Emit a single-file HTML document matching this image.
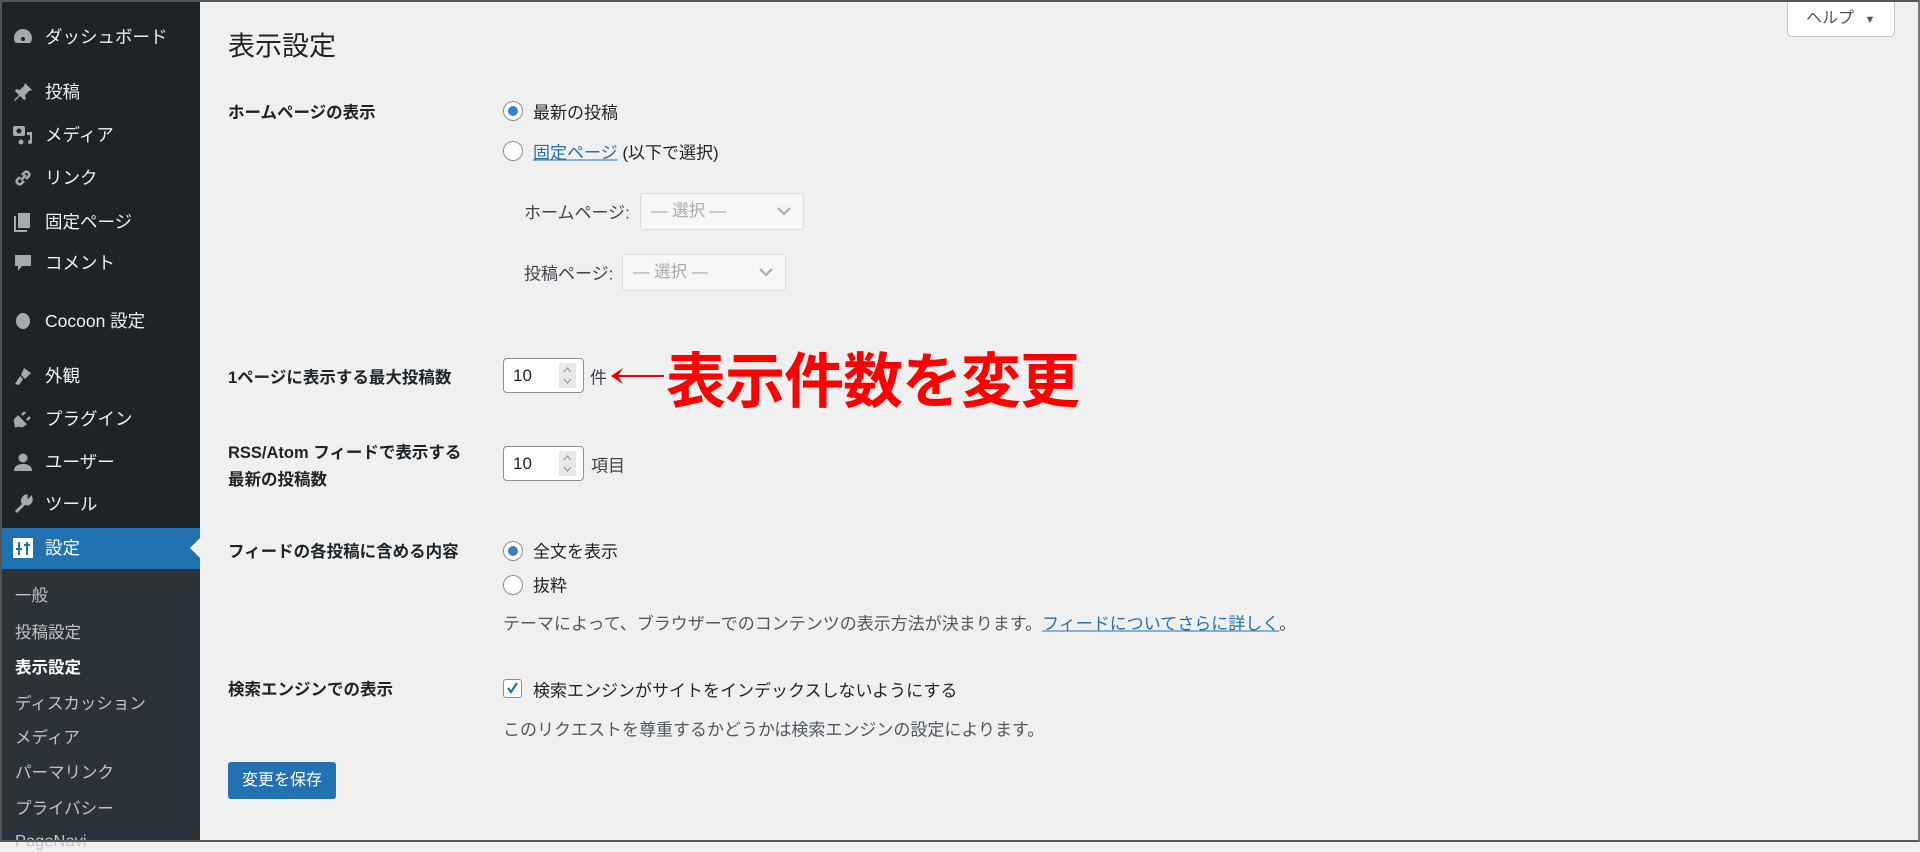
<!DOCTYPE html>
<html><head><meta charset="utf-8"><style>
*{margin:0;padding:0;box-sizing:border-box}
body{width:1920px;height:842px;overflow:hidden;background:#f0f0f1;font-family:"Liberation Sans","Noto Sans CJK JP",sans-serif;color:#1d2327;font-size:17px;position:relative}
.frame{position:absolute;inset:0;border:2px solid #555;border-right-color:#777;z-index:10;pointer-events:none}
#side{position:absolute;left:0;top:0;width:200px;height:842px;background:#1d2327}
#sub{position:absolute;left:0;top:569px;width:200px;height:273px;background:#2c3338}
.mi{position:absolute;left:45px;color:#f0f0f1;font-size:17.5px;line-height:20px;transform:translateY(-50%)}
.ic{position:absolute;left:12px;width:22px;height:22px;transform:translateY(-50%)}
.si{position:absolute;left:15px;color:#c3c4c7;font-size:16.5px;transform:translateY(-50%)}
.a{position:absolute;transform:translateY(-50%);white-space:nowrap}
.lab{position:absolute;left:228px;font-weight:bold;font-size:16.5px;transform:translateY(-50%);white-space:nowrap}
.radio{position:absolute;left:503px;width:20px;height:20px;border:1px solid #8c8f94;border-radius:50%;background:#fff;transform:translateY(-50%)}
.radio.on::after{content:"";position:absolute;left:4px;top:4px;width:10px;height:10px;border-radius:50%;background:#3582c4}
.sel{position:absolute;height:37px;border:1px solid #dcdcde;border-radius:4px;background:#f6f7f7;color:#a7aaad;font-size:16.5px;line-height:35px;padding-left:10px}
.sel svg{position:absolute;right:12px;top:12px}
.num{position:absolute;left:503px;width:81px;height:35px;border:1px solid #8c8f94;border-radius:4px;background:#fff;font-size:17px;line-height:33px;padding-left:9px}
.num .sp{position:absolute;right:7px;top:4px;width:17px;height:25px;background:#e8e8ea}
</style></head><body>
<div id="side"></div><div id="sub"></div>
<div style="position:absolute;left:0;top:528px;width:200px;height:41px;background:#2271b1"></div>
<div style="position:absolute;left:190px;top:538px;width:0;height:0;border-top:10px solid transparent;border-bottom:10px solid transparent;border-right:10px solid #f0f0f1"></div>

<svg class="ic" style="top:37px" viewBox="0 0 22 22"><path d="M11 3a9 9 0 0 0-9 9c0 2 .6 3.6 1.6 5h14.8A9 9 0 0 0 11 3z" fill="#a7aaad"/><circle cx="11" cy="13" r="2" fill="#1d2327"/></svg>
<div class="mi" style="top:37px">ダッシュボード</div>
<svg class="ic" style="top:92px" viewBox="0 0 22 22"><path d="M13 2l7 7-3 1-4 4 1 4-2 1-4-4-5 5-1-1 5-5-4-4 1-2 4 1 4-4z" fill="#a7aaad"/></svg>
<div class="mi" style="top:92px">投稿</div>
<svg class="ic" style="top:135px" viewBox="0 0 22 22"><rect x="1" y="2" width="12" height="10" rx="2" fill="#a7aaad"/><circle cx="7" cy="7" r="2.5" fill="#1d2327"/><path d="M15 8h5v10a2 2 0 1 1-2-2V11h-3z" fill="#a7aaad"/><circle cx="9" cy="18" r="2.5" fill="#a7aaad"/></svg>
<div class="mi" style="top:135px">メディア</div>
<svg class="ic" style="top:178px" viewBox="0 0 22 22"><path d="M9 13l5-5M8 10l-3 3a3 3 0 0 0 4 4l3-3M14 12l3-3a3 3 0 0 0-4-4l-3 3" stroke="#a7aaad" stroke-width="2.5" fill="none"/></svg>
<div class="mi" style="top:178px">リンク</div>
<svg class="ic" style="top:222px" viewBox="0 0 22 22"><rect x="6" y="2" width="12" height="15" fill="#a7aaad"/><path d="M3 5v15h12" stroke="#a7aaad" stroke-width="2" fill="none"/></svg>
<div class="mi" style="top:222px">固定ページ</div>
<svg class="ic" style="top:263px" viewBox="0 0 22 22"><path d="M3 3h16v11H10l-4 5v-5H3z" fill="#a7aaad"/></svg>
<div class="mi" style="top:263px">コメント</div>
<svg class="ic" style="top:321px" viewBox="0 0 22 22"><ellipse cx="11" cy="11" rx="7" ry="8" fill="#a7aaad"/></svg>
<div class="mi" style="top:321px">Cocoon 設定</div>
<svg class="ic" style="top:376px" viewBox="0 0 22 22"><path d="M12 3l7 5-6 6-4-4zM8 11l3 3-4 6-4-1z" fill="#a7aaad"/></svg>
<div class="mi" style="top:376px">外観</div>
<svg class="ic" style="top:419px" viewBox="0 0 22 22"><path d="M6 9l7 7-3 2-6-1-1-5zM10 7l3-3M15 12l3-3M3 19l3-3" stroke="#a7aaad" stroke-width="2.5" fill="#a7aaad"/></svg>
<div class="mi" style="top:419px">プラグイン</div>
<svg class="ic" style="top:462px" viewBox="0 0 22 22"><circle cx="11" cy="7" r="4.5" fill="#a7aaad"/><path d="M2 20c0-5 4-7 9-7s9 2 9 7z" fill="#a7aaad"/></svg>
<div class="mi" style="top:462px">ユーザー</div>
<svg class="ic" style="top:504px" viewBox="0 0 22 22"><path d="M4 19l8-8M14 3a5 5 0 0 0-3 7l5 1a5 5 0 0 0 3-6l-3 3-2-2z" stroke="#a7aaad" stroke-width="3" fill="#a7aaad"/></svg>
<div class="mi" style="top:504px">ツール</div>
<svg class="ic" style="top:548px" viewBox="0 0 22 22"><rect x="1" y="1" width="20" height="20" fill="#fff"/><path d="M7 5v13M15 5v13M4 12h6M12 8h6" stroke="#2271b1" stroke-width="2"/></svg>
<div class="mi" style="top:548px;color:#fff">設定</div>

<div class="si" style="top:594px">一般</div>
<div class="si" style="top:631px">投稿設定</div>
<div class="si" style="top:666px;color:#fff;font-weight:bold">表示設定</div>
<div class="si" style="top:702px">ディスカッション</div>
<div class="si" style="top:736px">メディア</div>
<div class="si" style="top:771px">パーマリンク</div>
<div class="si" style="top:807px">プライバシー</div>
<div class="si" style="top:842px">PageNavi</div>

<div style="position:absolute;left:1787px;top:-1px;width:108px;height:38px;border:1px solid #c3c4c7;border-top:none;border-radius:0 0 5px 5px;background:#fff;color:#50575e;font-size:16px;line-height:40px;padding-left:18px">ヘルプ <span style="font-size:11px;margin-left:6px">▼</span></div>

<div class="a" style="left:228px;top:44px;font-size:27px;color:#1d2327">表示設定</div>

<div class="lab" style="top:111px">ホームページの表示</div>
<div class="radio on" style="top:111px"></div><div class="a" style="left:533px;top:111px">最新の投稿</div>
<div class="radio" style="top:151px"></div><div class="a" style="left:533px;top:151px"><span style="color:#2271b1;text-decoration:underline">固定ページ</span> (以下で選択)</div>
<div class="a" style="left:524px;top:211px;color:#3c434a">ホームページ:</div>
<div class="sel" style="left:640px;top:193px;width:164px">— 選択 —<svg width="14" height="10" viewBox="0 0 14 10"><path d="M1 2l6 6 6-6" stroke="#a7aaad" stroke-width="2" fill="none"/></svg></div>
<div class="a" style="left:524px;top:272px;color:#3c434a">投稿ページ:</div>
<div class="sel" style="left:622px;top:254px;width:164px">— 選択 —<svg width="14" height="10" viewBox="0 0 14 10"><path d="M1 2l6 6 6-6" stroke="#a7aaad" stroke-width="2" fill="none"/></svg></div>

<div class="lab" style="top:376px">1ページに表示する最大投稿数</div>
<div class="num" style="top:358px">10<div class="sp"><svg width="17" height="25" viewBox="0 0 17 25"><path d="M5 9l3.5-4 3.5 4M5 16l3.5 4 3.5-4" stroke="#8c8f94" fill="none"/></svg></div></div>
<div class="a" style="left:590px;top:376px;color:#3c434a">件</div>
<svg style="position:absolute;left:610px;top:366px" width="56" height="20" viewBox="0 0 56 20"><path d="M2 10h52" stroke="#e00" stroke-width="2"/><path d="M1 10l12-8-5 8 5 8z" fill="#e00"/></svg>
<div class="a" style="left:666px;top:377px;color:#f00;font-size:60px;font-weight:bold;letter-spacing:-1px">表示件数を変更</div>

<div class="lab" style="transform:none;top:440px;line-height:27px">RSS/Atom フィードで表示する<br>最新の投稿数</div>
<div class="num" style="top:446px">10<div class="sp"><svg width="17" height="25" viewBox="0 0 17 25"><path d="M5 9l3.5-4 3.5 4M5 16l3.5 4 3.5-4" stroke="#8c8f94" fill="none"/></svg></div></div>
<div class="a" style="left:591px;top:464px;color:#3c434a">項目</div>

<div class="lab" style="top:550px">フィードの各投稿に含める内容</div>
<div class="radio on" style="top:551px"></div><div class="a" style="left:533px;top:550px">全文を表示</div>
<div class="radio" style="top:585px"></div><div class="a" style="left:533px;top:584px">抜粋</div>
<div class="a" style="left:503px;top:622px;color:#50575e">テーマによって、ブラウザーでのコンテンツの表示方法が決まります。<span style="color:#2271b1;text-decoration:underline">フィードについてさらに詳しく</span>。</div>

<div class="lab" style="top:688px">検索エンジンでの表示</div>
<div style="position:absolute;left:503px;top:679px;width:19px;height:19px;border:1px solid #8c8f94;border-radius:3px;background:#fff"><svg width="17" height="17" viewBox="0 0 17 17"><path d="M4 8l3 4 6-9" stroke="#2271b1" stroke-width="2.2" fill="none"/></svg></div>
<div class="a" style="left:533px;top:689px">検索エンジンがサイトをインデックスしないようにする</div>
<div class="a" style="left:503px;top:728px;color:#50575e">このリクエストを尊重するかどうかは検索エンジンの設定によります。</div>

<div style="position:absolute;left:228px;top:762px;width:108px;height:37px;background:#2271b1;border-radius:3px;color:#fff;font-size:16px;line-height:37px;text-align:center">変更を保存</div>
<div class="frame"></div>
</body></html>
